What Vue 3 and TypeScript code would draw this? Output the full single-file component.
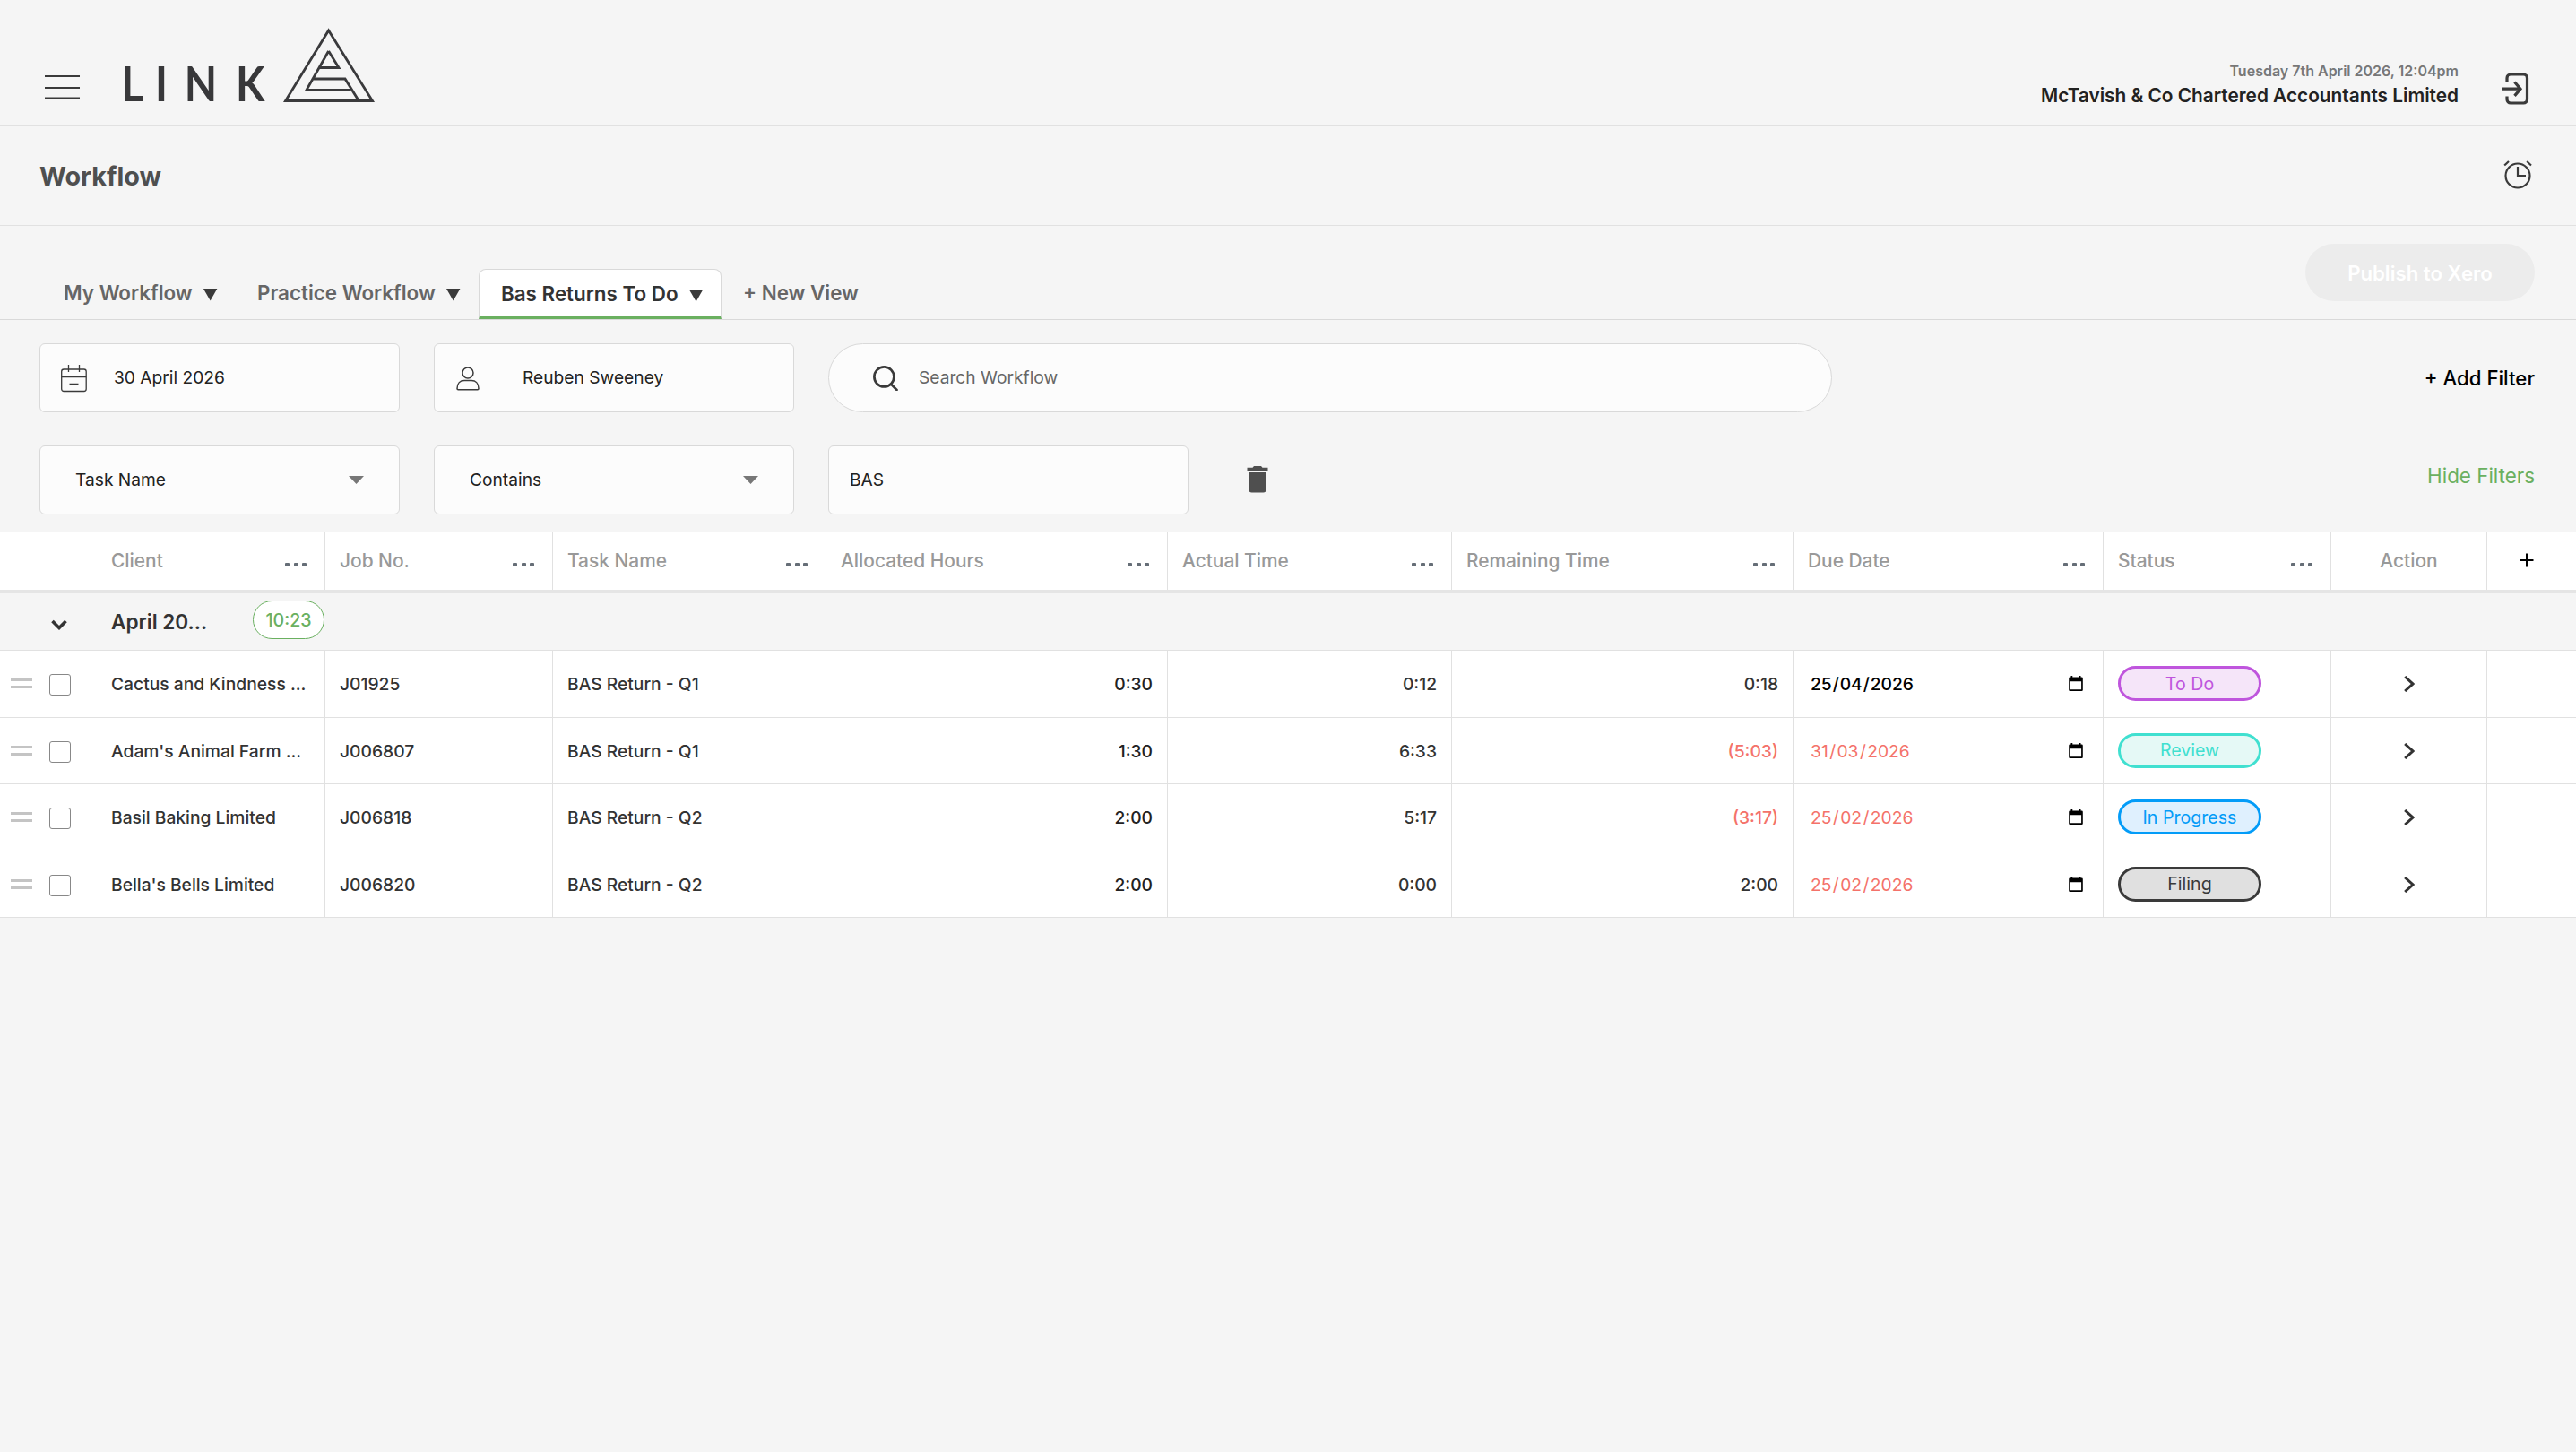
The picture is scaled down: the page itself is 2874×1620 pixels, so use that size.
<script setup lang="ts">
interface Column { label: string; menu: boolean; cls: string }
interface Row {
  client: string; job: string; task: string; allocated: string; actual: string
  remaining: string; over: boolean; due: string[]; late: boolean; status: string; tone: string
}

const columns: Column[] = [
  { label: 'Client', menu: true, cls: 'client' },
  { label: 'Job No.', menu: true, cls: '' },
  { label: 'Task Name', menu: true, cls: '' },
  { label: 'Allocated Hours', menu: true, cls: '' },
  { label: 'Actual Time', menu: true, cls: '' },
  { label: 'Remaining Time', menu: true, cls: '' },
  { label: 'Due Date', menu: true, cls: '' },
  { label: 'Status', menu: true, cls: '' },
  { label: 'Action', menu: false, cls: 'center' },
]

const rows: Row[] = [
  { client: 'Cactus and Kindness ...', job: 'J01925', task: 'BAS Return - Q1', allocated: '0:30', actual: '0:12', remaining: '0:18', over: false, due: ['25', '04', '2026'], late: false, status: 'To Do', tone: 'todo' },
  { client: "Adam's Animal Farm ...", job: 'J006807', task: 'BAS Return - Q1', allocated: '1:30', actual: '6:33', remaining: '(5:03)', over: true, due: ['31', '03', '2026'], late: true, status: 'Review', tone: 'review' },
  { client: 'Basil Baking Limited', job: 'J006818', task: 'BAS Return - Q2', allocated: '2:00', actual: '5:17', remaining: '(3:17)', over: true, due: ['25', '02', '2026'], late: true, status: 'In Progress', tone: 'progress' },
  { client: "Bella's Bells Limited", job: 'J006820', task: 'BAS Return - Q2', allocated: '2:00', actual: '0:00', remaining: '2:00', over: false, due: ['25', '02', '2026'], late: true, status: 'Filing', tone: 'filing' },
]
</script>

<template>
  <div class="page">
    <header class="top">
      <svg class="burger" viewBox="0 0 39 29"><path d="M0 2h39M0 15h39M0 26.5h39" fill="none" stroke="#3a3a3a" stroke-width="2" /></svg>
      <svg class="logo" viewBox="0 0 284 86">
        <text class="word" y="83" x="-3 39.300 76.200 140.400" transform="scale(0.89 1)">LINK</text>
        <g fill="none" stroke="#3a3a3c" stroke-width="2.8">
          <path d="M228.600 4 L277.500 82.500 H180.500 Z" />
          <path d="M228.600 27 L240 45.500 H219 M228.600 27 L204 70.300 H253 M212 58 H247 L262 82" />
        </g>
      </svg>
      <div class="who">
        <span class="date">Tuesday 7th April 2026, 12:04pm</span>
        <span class="firm">McTavish &amp; Co Chartered Accountants Limited</span>
      </div>
      <svg class="logout" viewBox="0 0 32 38" fill="none" stroke="#3a3a3a" stroke-width="3.200"><path d="M6 11.500V7a4 4 0 0 1 4-4h14.500a4 4 0 0 1 4 4v24a4 4 0 0 1-4 4H10a4 4 0 0 1-4-4v-3.500" /><path d="M0 19.200h20M14.500 11.500l6.500 7.700-6.500 7.700" /></svg>
    </header>

    <section class="title">
      <h1>Workflow</h1>
      <svg class="clock" viewBox="0 0 32 32" fill="none" stroke="#3a3a3a" stroke-width="2.200"><circle cx="16" cy="17" r="13.500" /><path d="M16 7v10h9M1.200 5.500L6 1M31 5.500L26.200 1" /></svg>
    </section>

    <nav class="tabs">
      <div class="tab first">My Workflow<i class="tri" /></div>
      <div class="tab second">Practice Workflow<i class="tri" /></div>
      <div class="tab active">Bas Returns To Do<i class="tri" /></div>
      <div class="tab new">+ New View</div>
      <button class="publish">Publish to Xero</button>
    </nav>

    <section class="filters">
      <div class="line">
        <div class="field datef">
          <svg viewBox="0 0 32 32" fill="none" stroke="#3a3a3a" stroke-width="1.300"><rect x="1.700" y="6" width="27.500" height="24.500" rx="2.500" /><path d="M1.700 14.500h27.500M9.500 1v8M21.500 1v8M10.500 22.300h10" /></svg>
          <span>30 April 2026</span>
        </div>
        <div class="field userf">
          <svg viewBox="0 0 26 28" fill="none" stroke="#3a3a3a" stroke-width="1.500"><circle cx="13" cy="8" r="6" /><path d="M1 25.500c0-6 3.500-9 8-9h8c4.500 0 8 3 8 9q0 1.200-1.200 1.200H2.200Q1 26.700 1 25.500Z" /></svg>
          <span>Reuben Sweeney</span>
        </div>
        <div class="field search">
          <svg viewBox="0 0 28 28" fill="none" stroke="#3a3a3a" stroke-width="2.700"><circle cx="12.400" cy="12.400" r="11" /><path d="M20 20.500l6.500 6.500" stroke-linecap="round" /></svg>
          <span>Search Workflow</span>
        </div>
        <span class="add">+ Add Filter</span>
      </div>
      <div class="line">
        <div class="field select"><span>Task Name</span><i class="caret" /></div>
        <div class="field select"><span>Contains</span><i class="caret" /></div>
        <div class="field value"><span>BAS</span></div>
        <svg class="trash" viewBox="0 0 24 30" fill="#4f4f4f"><path d="M0.500 1.800h6L8 0h8l1.500 1.800h6v3.400h-23zM2.500 7h19v19.500a3 3 0 0 1-3 3h-13a3 3 0 0 1-3-3z" /></svg>
        <span class="hide">Hide Filters</span>
      </div>
    </section>

    <div class="table">
      <div class="grid head">
        <div v-for="c in columns" :key="c.label" class="cell" :class="c.cls">
          {{ c.label }}<span v-if="c.menu" class="dots"><i /><i /><i /></span>
        </div>
        <div class="cell plus"><svg viewBox="0 0 16 16"><path d="M8 0.500v15M0.500 8h15" stroke="#000" stroke-width="2" /></svg></div>
      </div>
      <div class="group">
        <svg viewBox="0 0 18 12" fill="none" stroke="#333" stroke-width="3.600"><path d="M1.500 2L9 9.500 16.500 2" /></svg>
        <b>April 20...</b>
        <span class="badge">10:23</span>
      </div>
      <div v-for="r in rows" :key="r.job" class="grid row">
        <div class="cell client">
          <span class="handle" /><span class="check" />{{ r.client }}
        </div>
        <div class="cell">{{ r.job }}</div>
        <div class="cell">{{ r.task }}</div>
        <div class="cell num dark">{{ r.allocated }}</div>
        <div class="cell num">{{ r.actual }}</div>
        <div class="cell num" :class="{ red: r.over }">{{ r.remaining }}</div>
        <div class="cell due" :class="{ late: r.late }">
          <span>{{ r.due[0] }}<i>/</i>{{ r.due[1] }}<i>/</i>{{ r.due[2] }}</span>
          <svg viewBox="0 0 16 18"><path fill-rule="evenodd" d="M2.500 0h1.800v1.500h7.400V0h1.800v1.500H14.500q1.300 0 1.300 1.300v12.900q0 1.300-1.300 1.300h-13q-1.300 0-1.300-1.300V2.800q0-1.300 1.300-1.300h1zM1.900 6.300v9h12.200v-9z" /></svg>
        </div>
        <div class="cell"><span class="pill" :class="r.tone">{{ r.status }}</span></div>
        <div class="cell center"><svg class="go" viewBox="0 0 12 18" fill="none" stroke="#333" stroke-width="3"><path d="M1.200 1L10 9 1.200 17" /></svg></div>
        <div class="cell" />
      </div>
    </div>
  </div>
</template>

<style>
body { background: #f5f5f5; }
</style>

<style scoped>
.page {
  width: 2874px; height: 1620px; overflow: hidden; background: #f5f5f5;
  font-family: Inter, "Liberation Sans", sans-serif; color: #333;
}
.page, .page * { box-sizing: border-box; }
svg { display: block; flex: none; }
.top { height: 141px; border-bottom: 1px solid #e1e1e1; display: flex; padding: 0 51px 0 50px; }
.burger { width: 39px; height: 29px; margin-top: 83px; }
.logo { width: 284px; height: 86px; margin: 30px 0 0 49px; overflow: visible; }
.word { font: 700 53px Lato, sans-serif; fill: #38383a; }
.who { margin-left: auto; display: flex; flex-direction: column; align-items: flex-end; padding-top: 66px; }
.date { font-size: 16px; font-weight: 600; color: #777; line-height: 27px; }
.firm { font-size: 20.800px; font-weight: 600; color: #222; line-height: 28px; }
.logout { width: 32px; height: 38px; margin: 80px 0 0 48px; }
.title { height: 111px; border-bottom: 1px solid #e1e1e1; display: flex; justify-content: space-between; padding: 0 49px 0 44px; }
h1 { margin: 0; font-size: 28.800px; font-weight: 700; color: #4f4f4f; line-height: 111px; }
.clock { width: 32px; height: 32px; margin-top: 38px; }
.tabs { height: 105px; border-bottom: 1px solid #d9d9d9; display: flex; align-items: flex-end; padding-right: 46px; }
.tab { height: 56px; display: flex; align-items: center; padding-bottom: 3px; font-size: 22.400px; font-weight: 600; color: #666; white-space: nowrap; }
.tri { width: 16px; height: 14px; background: #3a3a3a; clip-path: polygon(0 0, 100% 0, 50% 100%); margin: 4px 0 0 12px; }
.first { width: 286px; padding-left: 71px; }
.second { width: 248px; padding-left: 1px; }
.active { width: 271px; padding: 1px 0 0 24px; color: #333; background: #fff; border: 1px solid #d9d9d9; border-bottom: 3px solid #6ab060; border-radius: 8px 8px 0 0; }
.new { margin-left: 24px; }
.publish { margin: 0 0 20px auto; width: 256px; height: 64px; border: 0; border-radius: 32px; background: #ececec; color: #fff; font: 600 22.200px Inter, sans-serif; padding: 0; }
.filters { height: 236px; padding: 26px 46px 0 44px; display: flex; flex-direction: column; gap: 37px; }
.line { display: flex; height: 77px; gap: 38px; }
.field { width: 402px; height: 77px; border: 1px solid #d9d9d9; border-radius: 6px; background: #fcfcfc; display: flex; align-items: center; font-size: 19.200px; color: #222; }
.field span { margin-bottom: 2px; }
.datef { padding-left: 22px; }
.datef svg { width: 32px; height: 32px; }
.datef span { margin-left: 28px; }
.userf { padding-left: 24px; }
.userf svg { width: 26px; height: 28px; }
.userf span { margin-left: 48px; }
.search { width: 1120px; border-radius: 39px; padding-left: 49px; color: #666; }
.search svg { width: 28px; height: 28px; }
.search span { margin-left: 23px; }
.select { justify-content: space-between; padding: 0 39px; }
.caret { width: 17px; height: 9px; background: #777; clip-path: polygon(0 0, 100% 0, 50% 100%); }
.value { padding-left: 23px; }
.trash { width: 24px; height: 30px; margin: 23px 0 0 27px; }
.add, .hide { margin-left: auto; font-size: 22.200px; line-height: 77px; color: #000; }
.add { font-weight: 500; }
.hide { font-size: 22.400px; color: #6ab060; line-height: 68px; }
.table { border-top: 1px solid #d9d9d9; }
.grid { display: grid; grid-template-columns: 363px 254px 305px 381px 317px 381px 346px 254px 174px 1fr; background: #fff; }
.cell { display: flex; align-items: center; padding: 0 16px; border-right: 1px solid #e1e1e1; white-space: nowrap; }
.cell:last-child { border-right: 0; }
.head { height: 68px; border-bottom: 4px solid #e5e5e5; font-size: 20.900px; font-weight: 500; color: #999; }
.head .cell { padding: 0 20px 2px 16px; }
.head .cell.client { padding-left: 124px; }
.head .cell.center { padding: 0 0 2px; }
.head .cell.plus { padding: 0 0 2px 36px; }
.dots { margin: 9px 0 0 auto; display: flex; gap: 4.500px; }
.dots i { width: 5px; height: 4px; border-radius: 1px; background: #666e77; }
.center { justify-content: center; }
.plus svg { width: 16px; height: 16px; }
.group { height: 64px; border-bottom: 1px solid #e1e1e1; display: flex; align-items: center; padding-left: 57px; font-size: 22.600px; }
.group svg { width: 18px; height: 12px; margin-top: 7px; }
.group b { font-weight: 600; margin-left: 49px; width: 158px; }
.badge { width: 80px; height: 43px; margin-bottom: 4px; border: 1px solid #6ab060; border-radius: 22px; background: #fff; color: #6ab060; font-size: 19.600px; font-weight: 500; display: flex; align-items: center; justify-content: center; }
.row { height: 75px; border-bottom: 1px solid #e1e1e1; font-size: 19.250px; font-weight: 500; }
.row:nth-child(even) { height: 74px; }
.row .client { padding-left: 12px; }
.handle { width: 24px; height: 11px; border: solid #c4c4c4; border-width: 3px 0; margin-bottom: 1px; }
.check { width: 24px; height: 24px; border: 1px solid #888; border-radius: 3px; margin: 2px 45px 0 19px; }
.num { justify-content: flex-end; }
.dark { color: #222; }
.red { color: #f4726a; }
.due { color: #000; padding: 0 22px 0 19px; justify-content: space-between; }
.due i { font-style: normal; margin: 0 0.900px; }
.due.late { color: #f4726a; font-weight: 400; }
.due.late i { margin: 0 1.400px; }
.due svg { width: 16px; height: 18px; fill: #000; }
.pill { width: 160px; height: 39px; margin-bottom: 1px; border: 3px solid; border-radius: 20px; display: flex; align-items: center; justify-content: center; font-size: 19.600px; font-weight: 400; }
.todo { color: #bf55dd; background: #f5e5f9; }
.review { color: #40e0d0; background: #e5f9f6; }
.progress { color: #039cf8; background: #dff0fe; }
.filing { color: #3a3a3a; background: #e0e0e0; }
.go { width: 12px; height: 18px; }
</style>
